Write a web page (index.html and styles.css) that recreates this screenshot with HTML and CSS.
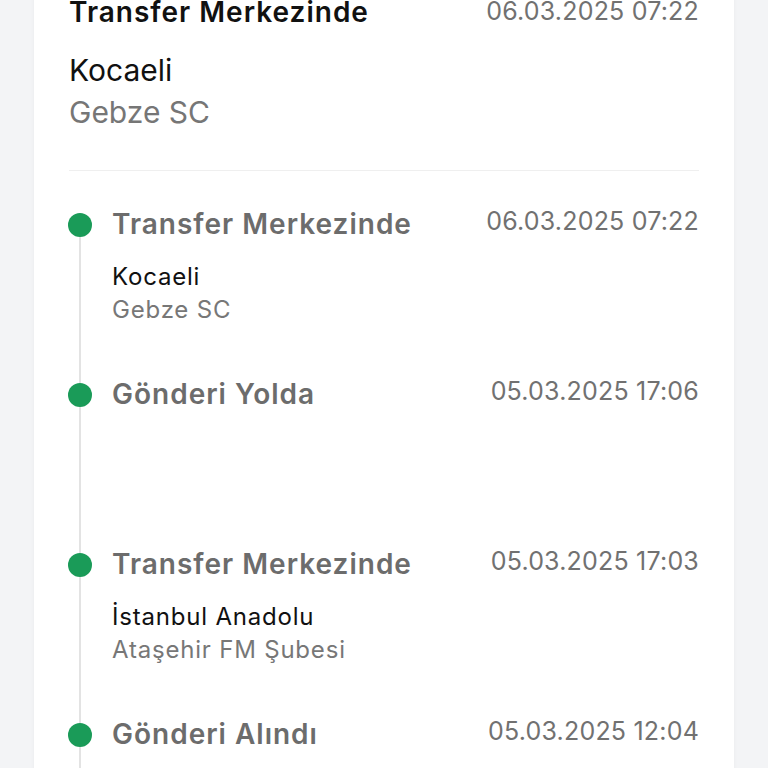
FILE: index.html
```html
<!DOCTYPE html>
<html lang="tr">
<head>
    <meta charset="UTF-8">
    <meta name="viewport" content="width=device-width, initial-scale=1.0">
    <title>Gönderi Takibi</title>
    <link rel="stylesheet" href="styles.css">
</head>
<body>
    <div class="card">
        <div class="current">
            <div class="row">
                <h2 class="current-title">Transfer Merkezinde</h2>
                <span class="current-date">06.03.2025 07:22</span>
            </div>
            <p class="current-city">Kocaeli</p>
            <p class="current-branch">Gebze SC</p>
        </div>

        <ul class="timeline">
            <li class="step">
                <div class="marker"><span class="dot"></span><span class="line"></span></div>
                <div class="step-body">
                    <div class="row">
                        <h3 class="step-title">Transfer Merkezinde</h3>
                        <span class="step-date">06.03.2025 07:22</span>
                    </div>
                    <p class="step-city">Kocaeli</p>
                    <p class="step-branch">Gebze SC</p>
                </div>
            </li>
            <li class="step">
                <div class="marker"><span class="dot"></span><span class="line"></span></div>
                <div class="step-body">
                    <div class="row">
                        <h3 class="step-title">Gönderi Yolda</h3>
                        <span class="step-date">05.03.2025 17:06</span>
                    </div>
                </div>
            </li>
            <li class="step">
                <div class="marker"><span class="dot"></span><span class="line"></span></div>
                <div class="step-body">
                    <div class="row">
                        <h3 class="step-title">Transfer Merkezinde</h3>
                        <span class="step-date">05.03.2025 17:03</span>
                    </div>
                    <p class="step-city">İstanbul Anadolu</p>
                    <p class="step-branch">Ataşehir FM Şubesi</p>
                </div>
            </li>
            <li class="step">
                <div class="marker"><span class="dot"></span><span class="line"></span></div>
                <div class="step-body">
                    <div class="row">
                        <h3 class="step-title">Gönderi Alındı</h3>
                        <span class="step-date">05.03.2025 12:04</span>
                    </div>
                </div>
            </li>
        </ul>
    </div>
</body>
</html>
```
FILE: styles.css
```css
body {
    margin: 0;
    background-color: #f3f4f6;
    font-family: Inter, "Noto Sans", sans-serif;
    color: #111;
}

.card {
    background-color: #ffffff;
    margin: -7px 34px 0;
    padding: 0 35px;
    min-height: 820px;
    box-shadow: 0 0 4px rgba(0, 0, 0, 0.04);
}

p, h2, h3 {
    margin: 0;
}

.row {
    display: flex;
    justify-content: space-between;
    align-items: flex-start;
}

.current {
    padding-bottom: 37px;
    border-bottom: 1px solid #efefef;
}

.current-title {
    font-size: 28px;
    font-weight: 600;
    letter-spacing: 1px;
    line-height: 38px;
    color: #111;
}

.current-date {
    font-size: 25px;
    letter-spacing: 0.2px;
    line-height: 36px;
    color: #717171;
}

.current-city {
    margin-top: 18px;
    font-size: 30px;
    line-height: 42px;
}

.current-branch {
    font-size: 30px;
    line-height: 42px;
    color: #767676;
}

.timeline {
    list-style: none;
    margin: 0;
    padding: 42px 0 0;
}

.step {
    display: flex;
    min-height: 170px;
}

.marker {
    width: 24px;
    margin-left: -1px;
    display: flex;
    flex-direction: column;
    align-items: center;
}

.dot {
    width: 24px;
    height: 24px;
    border-radius: 50%;
    background-color: #1a9b58;
    flex-shrink: 0;
}

.line {
    width: 2px;
    flex: 1;
    background-color: #e3e3e3;
}

.step-body {
    flex: 1;
    margin-left: 20px;
}

.step-title {
    font-size: 28px;
    font-weight: 600;
    letter-spacing: 1px;
    line-height: 22px;
    color: #6c6c6c;
}

.step-date {
    font-size: 25px;
    letter-spacing: 0.2px;
    line-height: 16px;
    color: #717171;
}

.step-city {
    margin-top: 25px;
    font-size: 24px;
    letter-spacing: 0.8px;
    line-height: 33px;
}

.step-branch {
    font-size: 24px;
    letter-spacing: 0.8px;
    line-height: 33px;
    color: #777;
}
```
